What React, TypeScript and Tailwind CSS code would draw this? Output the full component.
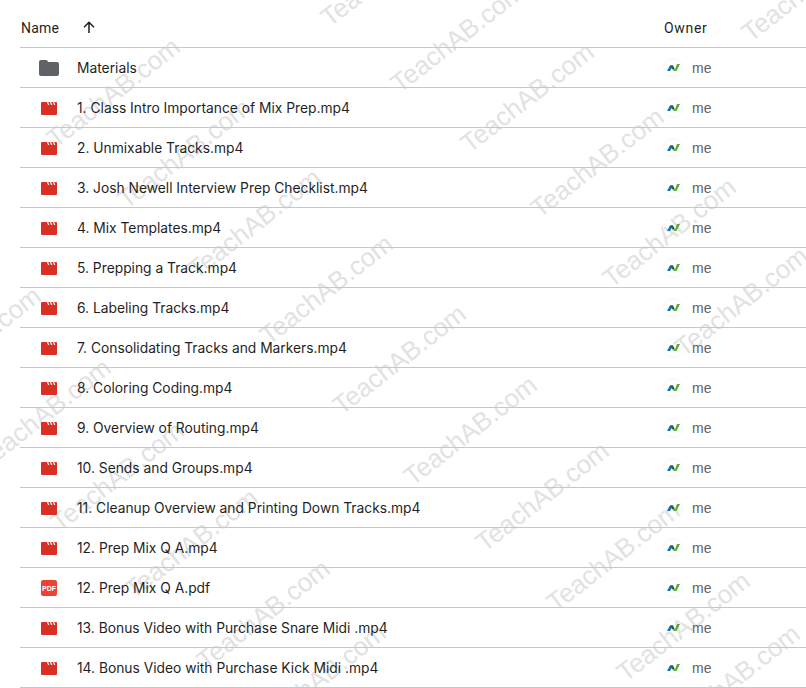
const files = [
  { name: 'Materials', type: 'folder' },
  { name: '1. Class Intro Importance of Mix Prep.mp4', type: 'video' },
  { name: '2. Unmixable Tracks.mp4', type: 'video' },
  { name: '3. Josh Newell Interview Prep Checklist.mp4', type: 'video' },
  { name: '4. Mix Templates.mp4', type: 'video' },
  { name: '5. Prepping a Track.mp4', type: 'video' },
  { name: '6. Labeling Tracks.mp4', type: 'video' },
  { name: '7. Consolidating Tracks and Markers.mp4', type: 'video' },
  { name: '8. Coloring Coding.mp4', type: 'video' },
  { name: '9. Overview of Routing.mp4', type: 'video' },
  { name: '10. Sends and Groups.mp4', type: 'video' },
  { name: '11. Cleanup Overview and Printing Down Tracks.mp4', type: 'video' },
  { name: '12. Prep Mix Q A.mp4', type: 'video' },
  { name: '12. Prep Mix Q A.pdf', type: 'pdf' },
  { name: '13. Bonus Video with Purchase Snare Midi .mp4', type: 'video' },
  { name: '14. Bonus Video with Purchase Kick Midi .mp4', type: 'video' },
];

// left / bottom of each watermark stamp's T
const marks: [number, number][] = [
  [43, 143], [114, 204], [184, 274], [256, 340], [329, 410], [400, 481], [472, 547], [543, 607], [613, 677],
  [317, 22], [387, 88], [457, 148], [527, 213], [599, 283], [671, 352],
  [-96, 392], [-26, 464], [47, 527], [121, 594], [193, 665], [249, 729],
  [738, 37], [663, 730],
];

function FileIcon({ type }: { type: string }) {
  if (type === 'folder') {
    return (
      <svg width="20" height="16" viewBox="0 0 20 16" className="block">
        <path d="M2 0h5.5l2 2H18a2 2 0 0 1 2 2v10a2 2 0 0 1-2 2H2a2 2 0 0 1-2-2V2a2 2 0 0 1 2-2z" fill="#5f6368" />
      </svg>
    );
  }
  if (type === 'pdf') {
    return (
      <div className="w-4 h-4 rounded-[2px] bg-[#ea4335] flex items-center justify-center text-white text-[7px] font-bold leading-none font-['Liberation_Sans',sans-serif]">
        PDF
      </div>
    );
  }
  return (
    <svg width="16" height="13" viewBox="0 0 16 13" className="block">
      <path d="M0 1a1 1 0 0 1 1-1h14a1 1 0 0 1 1 1v11a1 1 0 0 1-1 1H1a1 1 0 0 1-1-1z" fill="#d93025" />
      <path d="M6 0h1.2l1 3H7zM9 0h1.2l1 3H10zM12 0h1.2l1 3H13z" fill="#fff" />
    </svg>
  );
}

function Avatar() {
  return (
    <div className="w-5 h-5 mb-[2px] rounded-full border border-[#f7f7f7] flex items-center justify-center">
      <svg width="13" height="7" viewBox="0 0 13 7" className="block">
        <path d="M0 7 L3 1.5 L6 1.5 L3 7z" fill="#1a6fb0" />
        <path d="M3 1.5 L6 1.5 L8 5.5 L5.5 5.5z" fill="#16663c" />
        <path d="M5.5 5.5 L8 5.5 L10 0 L13 0 L9.5 7 L7 7z" fill="#5fa83a" />
      </svg>
    </div>
  );
}

export default function App() {
  return (
    <div className="relative w-[806px] h-[688px] overflow-hidden bg-white font-['Roboto',sans-serif]">
      {marks.map(([x, y], i) => (
        <span
          key={i}
          className="absolute text-[26px] leading-none whitespace-nowrap text-[#e2e2e2] font-['Liberation_Sans',sans-serif] origin-bottom-left rotate-[-38deg]"
          style={{ left: x + 15, top: y + 9 - 26 }}
        >
          TeachAB.com
        </span>
      ))}
      <div className="relative pl-5">
        <div className="h-12 pt-2 flex items-center border-b border-[#c7c7c7] text-sm text-[#1f1f1f]">
          <span className="ml-px w-[48px] tracking-[0.2px]">Name</span>
          <svg width="12" height="12" viewBox="0 0 12 12" fill="none" stroke="#1f1f1f" strokeWidth="1.5" className="ml-[14px] -mt-[2px]">
            <path d="M6 12V1.2M1 6.2l5-5 5 5" />
          </svg>
          <span className="ml-[569px] tracking-[0.7px]">Owner</span>
        </div>
        {files.map((f) => (
          <div key={f.name} className="h-10 pt-[2px] flex items-center border-b border-[#c7c7c7] text-sm text-[#1f1f1f]">
            <div className="w-[57px] pl-[19px] shrink-0">
              <div className="flex justify-center w-5 mb-[1px]">
                <FileIcon type={f.type} />
              </div>
            </div>
            <span className="w-[586px] shrink-0 font-['Inter',sans-serif] text-[13.8px]">{f.name}</span>
            <Avatar />
            <span className="ml-[9px] mb-[2px] text-[#5f6368] font-['Liberation_Sans',sans-serif]">me</span>
          </div>
        ))}
      </div>
    </div>
  );
}
